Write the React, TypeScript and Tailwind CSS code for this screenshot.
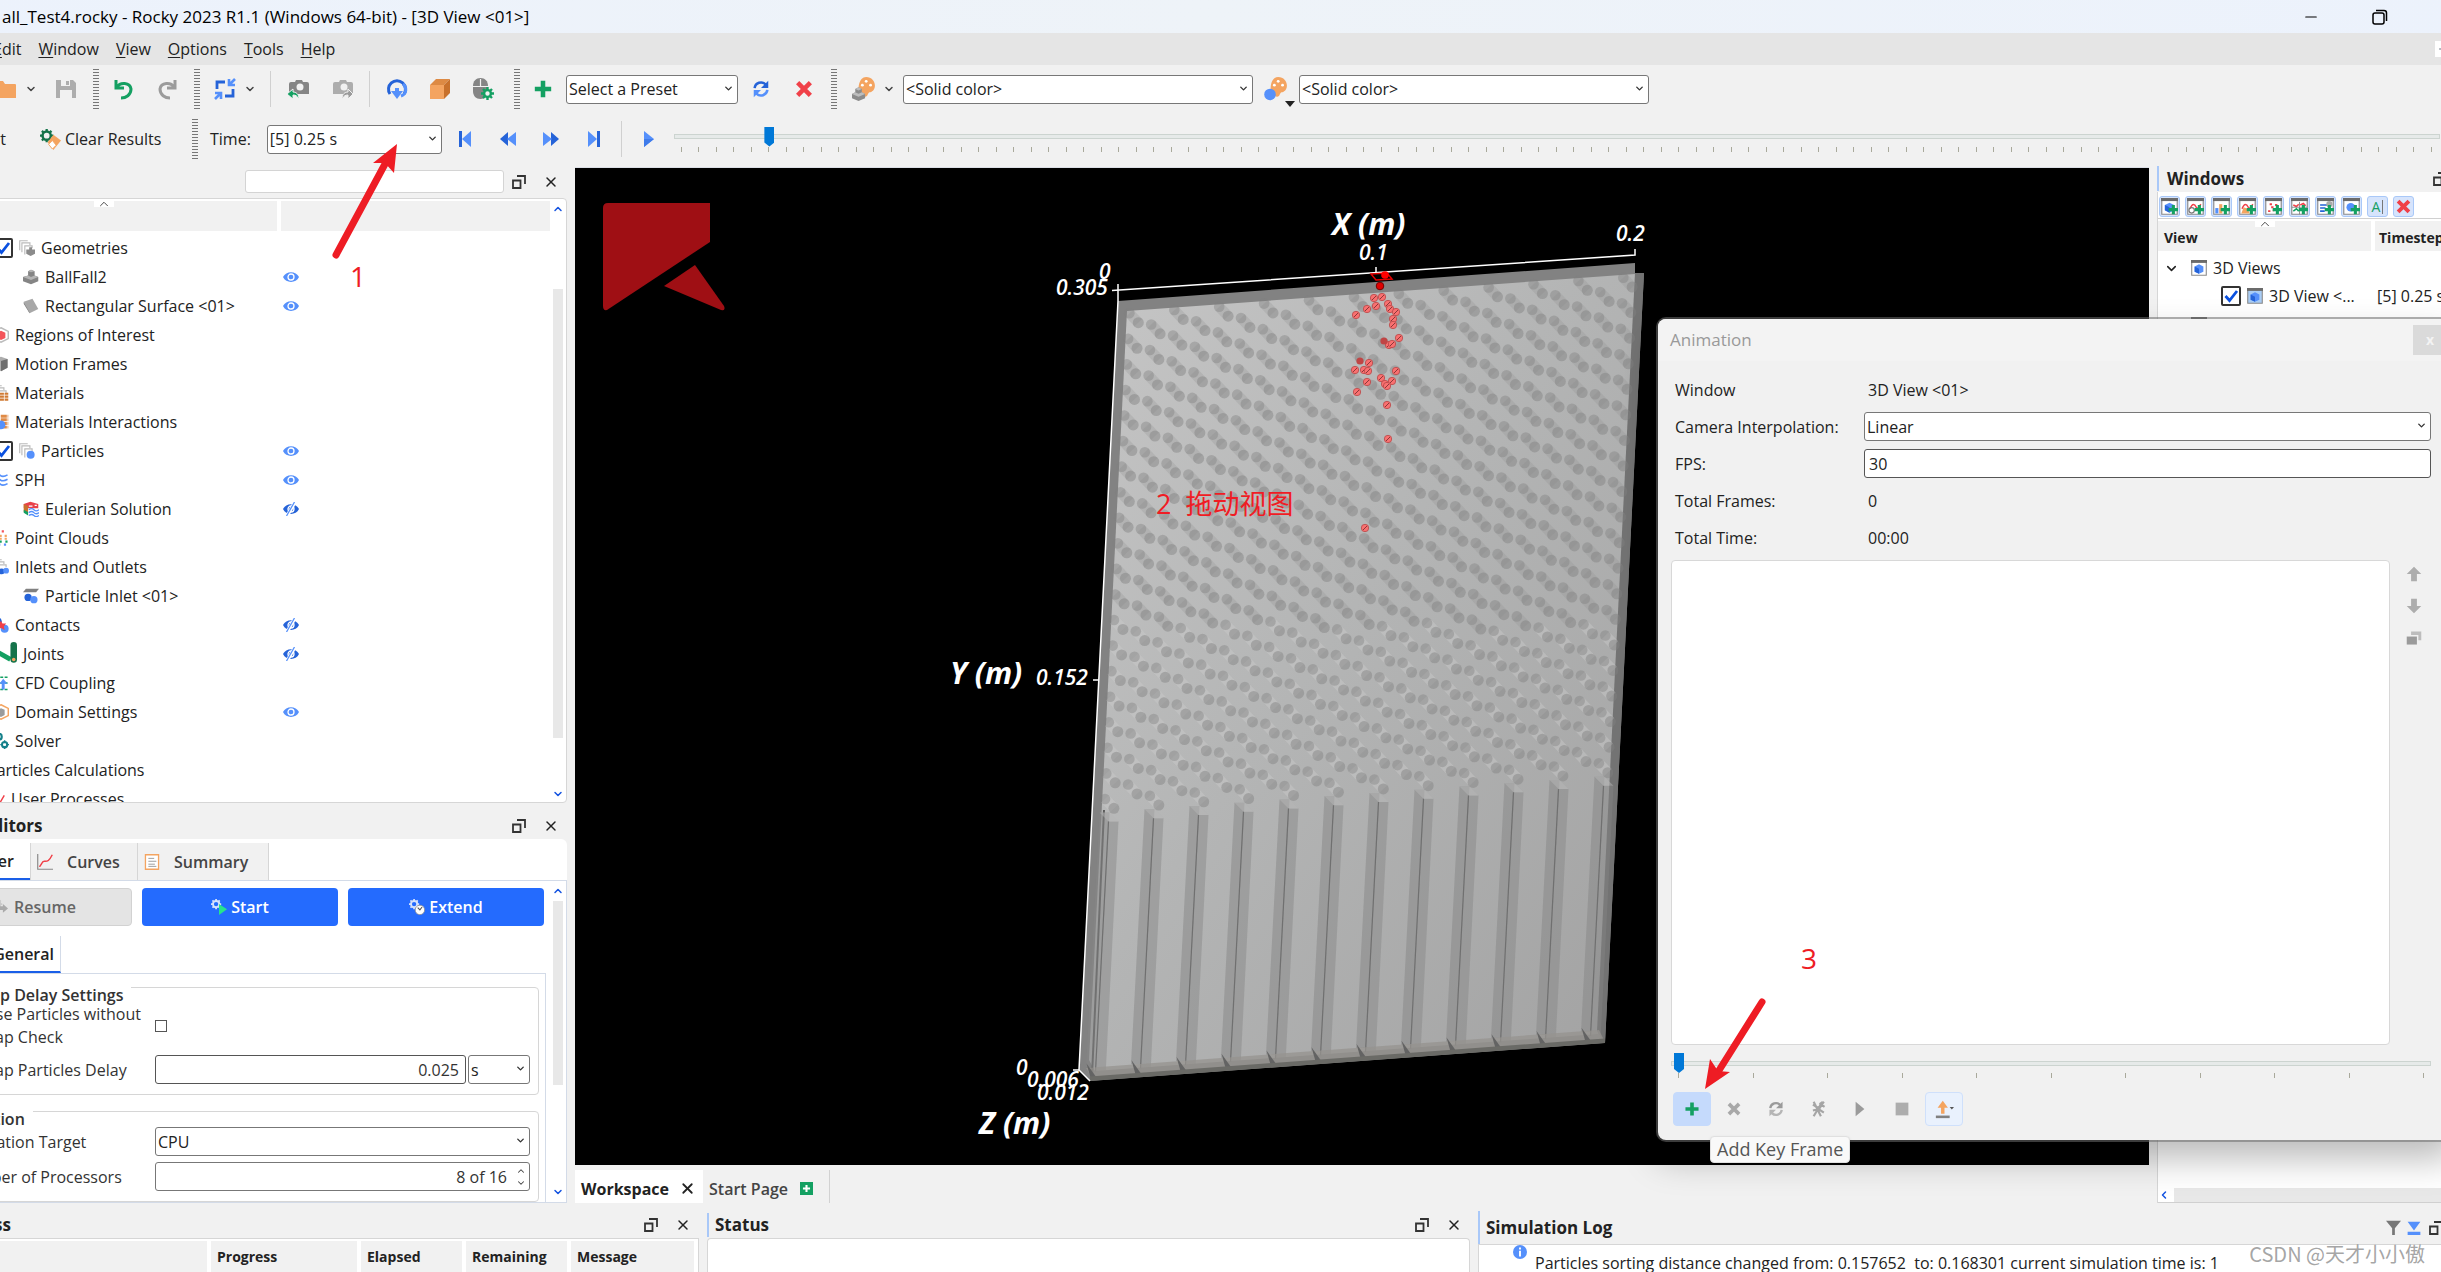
import React from 'react';
import { ChevronDown, ChevronUp, ChevronLeft, Minus, X } from 'lucide-react';

const BLUE = '#5590fb';
const DEEP = '#2563d8';
const GREEN = '#14a062';
const ORANGE = '#f4a460';

type IconProps = { children: React.ReactNode; size?: number; className?: string };

const Svg = ({ children, size = 22, className = '' }: IconProps) => (
  <svg width={size} height={size} viewBox="0 0 22 22" fill="none" aria-hidden="true" className={`shrink-0 ${className}`}>
    {children}
  </svg>
);

const Tool = ({ label, children }: { label: string; children: React.ReactNode }) => (
  <button type="button" aria-label={label} title={label} className="flex h-7 w-[22px] shrink-0 items-center justify-center">
    {children}
  </button>
);

const Grip = () => <div className="h-10 w-1.5 shrink-0 bg-[repeating-linear-gradient(to_bottom,#777_0_1px,transparent_1px_3px)]" />;
const Sep = () => <div className="h-9 w-px shrink-0 bg-[#d0d0d0]" />;

interface DropProps {
  label: string;
  value: string;
  className?: string;
}

const Drop = ({ label, value, className = '' }: DropProps) => (
  <div className={`relative h-[29px] shrink-0 ${className}`}>
    <select aria-label={label} defaultValue={value} className="h-full w-full appearance-none rounded-[3px] border border-[#777] bg-white pr-5 pl-0.5 text-base leading-none text-[#222]">
      <option>{value}</option>
    </select>
    <ChevronDown size={11} strokeWidth={3} className="pointer-events-none absolute top-2 right-1 text-[#333]" />
  </div>
);

const FloatIcon = () => (
  <svg width="14" height="14" viewBox="0 0 14 14" fill="none" stroke="#333" strokeWidth="1.8" aria-hidden="true">
    <path d="M1 5.5h7.5V13H1zM5 1h8v8" />
  </svg>
);

const DockButtons = () => (
  <div className="flex shrink-0 items-center gap-[17px]">
    <button type="button" aria-label="Float"><FloatIcon /></button>
    <button type="button" aria-label="Close"><X size={16} strokeWidth={2.2} className="text-[#222]" /></button>
  </div>
);

/* ---------- toolbar drawings ---------- */

const Refresh = ({ a = BLUE, b = DEEP, size = 22 }: { a?: string; b?: string; size?: number }) => (
  <Svg size={size}>
    <path d="M4 10a7 7 0 0 1 12-4" stroke={b} strokeWidth="2.8" />
    <path d="M19 2v8h-8z" fill={b} />
    <path d="M18 12a7 7 0 0 1-12 4" stroke={a} strokeWidth="2.8" />
    <path d="M3 20v-8h8z" fill={a} />
  </Svg>
);

const Plus = ({ size = 22 }: { size?: number }) => (
  <Svg size={size}><path d="M11 2v18M2 11h18" stroke={GREEN} strokeWidth="5" /></Svg>
);

const Cross = ({ color = '#f04048', size = 22 }: { color?: string; size?: number }) => (
  <Svg size={size}><path d="M4 4l14 14M18 4L4 18" stroke={color} strokeWidth="5" /></Svg>
);

const Camera = ({ body, arrow, flip }: { body: string; arrow: string; flip?: boolean }) => (
  <Svg>
    <path d="M4 4h4l1-2h6l1 2h4a2 2 0 0 1 2 2v10H2V6a2 2 0 0 1 2-2z" fill={body} />
    <circle cx="13" cy="9" r="3.5" fill="#f1f1f1" />
    {flip ? (
      <path d="M11 21c0-5 3-7 6-7v-3l5 5-5 5v-4c-3 0-4 1-6 4z" fill={arrow} stroke="#f1f1f1" />
    ) : (
      <path d="M12 21c0-5-3-7-6-7v-3l-6 5 6 5v-4c3 0 4 1 6 4z" fill={arrow} stroke="#f1f1f1" />
    )}
  </Svg>
);

const Palette = ({ cube }: { cube?: boolean }) => (
  <Svg size={24}>
    <path d="M13 0c5 0 8 4 8 8s-3 6-5 6c-2 1-1 4-4 4s-3-3-5-4c-2-2-1-14 6-14z" fill={ORANGE} />
    <circle cx="13" cy="4" r="1.3" fill="#fff" />
    <circle cx="9.5" cy="7.5" r="1.3" fill="#fff" />
    <circle cx="17" cy="7.5" r="1.3" fill="#fff" />
    {cube ? (
      <g>
        <path d="M3 11l3-1.5L9 11v3l3 1.5v4L6 22l-6-2.5v-4L3 14z" fill="#8b8b8b" />
        <path d="M3 11l3 1.4L9 11 6 9.5zM0 15.5L6 18l6-2.5L9 14l-3 1.3L3 14z" fill="#bdbdbd" />
      </g>
    ) : (
      <circle cx="5.5" cy="16" r="5.3" fill={BLUE} />
    )}
  </Svg>
);

const SmallGear = ({ color, children, size = 22 }: { color: string; children?: React.ReactNode; size?: number }) => (
  <Svg size={size}>
    <circle cx="7" cy="7" r="4.3" stroke={color} strokeWidth="2.6" />
    <path d="M7 0v3M7 11v3M0 7h3M11 7h3M2 2l2 2M10 10l2 2M12 2l-2 2M2 12l2-2" stroke={color} strokeWidth="2.4" />
    {children}
  </Svg>
);

const MENUS = ['Edit', 'Window', 'View', 'Options', 'Tools', 'Help'];

const TitleBar = () => (
  <header className="flex h-[33px] shrink-0 items-center bg-gradient-to-r from-[#ecf2fc] via-[#eef3f8] to-[#ecf2fc] pr-[93px] pl-[66px]">
    <h1 className="flex-1 text-[17px] text-black">all_Test4.rocky - Rocky 2023 R1.1 (Windows 64-bit) - [3D View &lt;01&gt;]</h1>
    <div className="flex items-center gap-[52px] text-black">
      <button type="button" aria-label="Minimize"><Minus size={18} strokeWidth={1.5} /></button>
      <button type="button" aria-label="Restore">
        <svg width="16" height="16" viewBox="0 0 16 16" fill="none" stroke="#000" strokeWidth="1.5">
          <rect x="1" y="4" width="11" height="11" rx="2" />
          <path d="M4 1.5h8a2.5 2.5 0 0 1 2.5 2.5v8" />
        </svg>
      </button>
    </div>
  </header>
);

const MenuBar = () => (
  <nav className="flex h-8 shrink-0 items-center bg-[#e5e5e5] pl-[57px] text-base text-[#222]">
    <div className="flex gap-[17px]">
      {MENUS.map((m) => (
        <button key={m} type="button">
          <span className="underline decoration-1 underline-offset-2">{m[0]}</span>{m.slice(1)}
        </button>
      ))}
    </div>
    <button type="button" aria-label="Minimize child window" className="mr-[30px] ml-auto h-4 w-4 bg-white">
      <Minus size={12} className="mx-auto text-gray-500" />
    </button>
  </nav>
);

const MainToolbar = () => (
  <div className="flex h-12 shrink-0 items-center pl-[58px]">
    <Tool label="Open">
      <Svg><path d="M0 3h9l2 3h10a1 1 0 0 1 1 1v13H0z" fill={ORANGE} /></Svg>
    </Tool>
    <ChevronDown size={12} strokeWidth={3} className="mr-[18px] ml-[9px] shrink-0 text-[#444]" />
    <Tool label="Save">
      <Svg>
        <path d="M1 2h17l3 3v15H1z" fill="#adadad" />
        <path d="M6 2h9v6H6zM5 12h12v8H5z" fill="#f1f1f1" />
        <path d="M11 3h3v4h-3z" fill="#adadad" />
      </Svg>
    </Tool>
    <div className="ml-4 flex items-center gap-3.5">
      <Grip />
      <div className="flex gap-[21px]">
        <Tool label="Undo">
          <Svg><path d="M3 2v8h8M4 9c3-5 13-5 14 2 0 6-5 9-10 9" stroke={GREEN} strokeWidth="3" /></Svg>
        </Tool>
        <Tool label="Redo">
          <Svg><path d="M19 2v8h-8M18 9C15 4 5 4 4 11c0 6 5 9 10 9" stroke="#9b9b9b" strokeWidth="3" /></Svg>
        </Tool>
      </div>
    </div>
    <div className="ml-4 flex items-center gap-3.5">
      <Grip />
      <div className="flex items-center">
        <Tool label="Fit view">
          <Svg>
            <path d="M21 1l-6 6M15 1v6h6" stroke={BLUE} strokeWidth="2.6" />
            <path d="M1 21l6-6M1 15h6v6" stroke={BLUE} strokeWidth="2.6" />
            <path d="M19 11v7h-8M3 11V4h8" stroke={DEEP} strokeWidth="2.8" />
          </Svg>
        </Tool>
        <ChevronDown size={12} strokeWidth={3} className="ml-2 text-[#444]" />
      </div>
    </div>
    <div className="ml-3.5 flex items-center gap-4">
      <Sep />
      <div className="flex gap-[22px]">
        <Tool label="Previous camera"><Camera body="#858585" arrow={GREEN} /></Tool>
        <Tool label="Next camera"><Camera body="#adadad" arrow="#9b9b9b" flip /></Tool>
      </div>
      <Sep />
      <div className="flex gap-[21px]">
        <Tool label="Rotate">
          <Svg>
            <path d="M4 16A8.5 8.5 0 1 1 18 16" stroke={DEEP} strokeWidth="3" />
            <path d="M15 18c6-2 6-9 2-12" stroke={BLUE} strokeWidth="3" />
            <path d="M5 13h12l-6 8z" fill={BLUE} />
            <path d="M9 10h4v5H9z" fill={BLUE} />
          </Svg>
        </Tool>
        <Tool label="Box">
          <Svg>
            <path d="M1 7h14v14H1z" fill={ORANGE} />
            <path d="M1 7l6-6h14l-6 6z" fill="#dd8a44" />
            <path d="M15 7l6-6v14l-6 6z" fill="#c8712c" />
          </Svg>
        </Tool>
        <Tool label="Mouse settings">
          <Svg>
            <path d="M1 8C1 3 4 0 8.500 0S16 3 16 8v5c0 5-3 8-7.500 8S1 18 1 13z" fill="#858585" />
            <path d="M1 8.5h15M8.5 1v7" stroke="#f1f1f1" strokeWidth="1.2" />
            <path d="M15.5 9v13M9 15.5h13M11 11l9 9M20 11l-9 9" stroke={GREEN} strokeWidth="2.4" />
            <circle cx="15.5" cy="15.5" r="3.4" stroke={GREEN} strokeWidth="2.4" fill="#f1f1f1" />
          </Svg>
        </Tool>
      </div>
    </div>
    <div className="ml-5 flex items-center gap-3">
      <Grip />
      <Tool label="Add preset"><Plus size={20} /></Tool>
      <Drop label="Preset" value="Select a Preset" className="w-[172px]" />
      <div className="flex gap-[21px]">
        <Tool label="Reload preset"><Refresh size={20} /></Tool>
        <Tool label="Delete preset"><Cross size={20} /></Tool>
      </div>
    </div>
    <div className="ml-4 flex items-center">
      <Grip />
      <div className="mr-2 ml-4 flex items-center gap-2">
        <Tool label="Geometry color"><Palette cube /></Tool>
        <ChevronDown size={12} strokeWidth={3} className="text-[#444]" />
      </div>
      <Drop label="Geometry coloring" value="<Solid color>" className="w-[350px]" />
      <div className="relative mx-3">
        <Tool label="Particle color"><Palette /></Tool>
        <span className="absolute -right-2 -bottom-1 border-x-[5px] border-t-[6px] border-x-transparent border-t-[#222]" />
      </div>
      <Drop label="Particle coloring" value="<Solid color>" className="w-[350px]" />
    </div>
  </div>
);

interface SliderProps {
  label: string;
  value: number;
  max: number;
  ticks: number;
}

const Slider = ({ label, value, max, ticks }: SliderProps) => (
  <div className="min-w-0 flex-1">
    <div className="relative flex h-5 items-center">
      <div className="h-[5px] w-full border border-[#ccd4d0] bg-[#e6eae9]" />
      <input
        type="range"
        aria-label={label}
        min={0}
        max={max}
        defaultValue={value}
        className="absolute inset-0 w-full appearance-none bg-transparent px-[3px] [&::-webkit-slider-thumb]:h-5 [&::-webkit-slider-thumb]:w-2.5 [&::-webkit-slider-thumb]:appearance-none [&::-webkit-slider-thumb]:bg-[#0078d7] [&::-webkit-slider-thumb]:[clip-path:polygon(0_0,100%_0,100%_80%,50%_100%,0_80%)]"
      />
    </div>
    <div className="flex justify-between px-[7px]">
      {Array.from({ length: ticks }, (_, i) => <i key={i} className="h-[5px] w-px bg-[#a9a99b]" />)}
    </div>
  </div>
);

const TimeToolbar = () => (
  <div className="flex h-[52px] shrink-0 items-center pr-[41px] text-base text-[#222]">
    <button type="button" className="w-[70px] text-right">Start</button>
    <button type="button" className="ml-[34px] flex w-[136px] items-center gap-1">
      <SmallGear color="#15734a" size={21}>
        <path d="M14 6l8 6-8 10-6-8z" fill={ORANGE} />
        <path d="M13 12l4 5-4 4-4-5z" fill="#fff" stroke={ORANGE} />
      </SmallGear>
      Clear Results
    </button>
    <div className="ml-4 flex items-center">
      <Grip />
      <span className="mr-4 ml-3">Time:</span>
      <Drop label="Time" value="[5] 0.25 s" className="w-[175px]" />
    </div>
    <div className="mr-4 ml-3 flex gap-[21px]">
      <Tool label="First step">
        <Svg><path d="M5 3h3v16H5z" fill={DEEP} /><path d="M17 3v16L8 11z" fill={BLUE} /></Svg>
      </Tool>
      <Tool label="Previous step">
        <Svg><path d="M11 4v14l-8-7z" fill={DEEP} /><path d="M19 4v14l-9-7z" fill={BLUE} /></Svg>
      </Tool>
      <Tool label="Next step">
        <Svg><path d="M11 4v14l8-7z" fill={DEEP} /><path d="M3 4v14l9-7z" fill={BLUE} /></Svg>
      </Tool>
      <Tool label="Last step">
        <Svg><path d="M14 3h3v16h-3z" fill={DEEP} /><path d="M5 3v16l9-8z" fill={BLUE} /></Svg>
      </Tool>
    </div>
    <Sep />
    <div className="mr-3.5 ml-4 flex">
      <Tool label="Play"><Svg><path d="M6 3l10 8-10 8z" fill={BLUE} /><path d="M6 11h10l-10 8z" fill="#3f7bea" /></Svg></Tool>
    </div>
    <Slider label="Timestep" value={5} max={100} ticks={101} />
  </div>
);

/* ---------- data tree ---------- */

const Stack = ({ children }: { children: React.ReactNode }) => (
  <Svg size={16}>
    <path d="M1 14V1h11M4 17V4h11v3M8 20V8h10v3" stroke="#bbb" strokeWidth="1.6" />
    {children}
  </Svg>
);

const Eye = ({ off }: { off?: boolean }) => (
  <svg width="16" height="14" viewBox="0 0 16 14" fill="none" aria-hidden="true">
    <path d="M0 7c3-6.500 13-6.500 16 0-3 6.500-13 6.500-16 0z" fill={off ? DEEP : BLUE} />
    <circle cx="8" cy="7" r="3" stroke="#fff" strokeWidth="1.3" />
    {off && <path d="M12 0L4 14" stroke="#fff" strokeWidth="3.5" />}
    {off && <path d="M11.5 0l-8 14" stroke={BLUE} strokeWidth="1.3" />}
  </svg>
);

const ICONS: Record<string, React.ReactNode> = {
  geometries: <Stack><path d="M10 13h4v-3h4v3h4v6l-6 3-6-3z" fill="#8b8b8b" /></Stack>,
  solid: (
    <Svg size={16}>
      <path d="M7 3l4-2 5 2v6l5 2v6l-10 4-11-4v-6l7-2z" fill="#858585" />
      <path d="M7 3l4 1.500L16 3l-5-2zM0 11l11 4 10-4-5-2-5 2-4-2z" fill="#b5b5b5" />
    </Svg>
  ),
  surface: <Svg size={16}><path d="M1 5l12-4 8 14-12 6z" fill="#a8a8a8" /><path d="M1 5v3l8 13v-1z" fill="#777" /></Svg>,
  region: <Svg size={16}><path d="M11 1l10 5v10l-10 5L1 16V6z" stroke="#bbb" strokeWidth="2" /><path d="M11 5l6 3v7l-6 3-6-3V8z" fill="#f4545a" /></Svg>,
  frame: <Svg size={16}><path d="M1 4l10-3 9 3v12l-9 5-10-5z" fill="#adadad" /><path d="M11 7l9-3v12l-9 5z" fill="#6f6f6f" /></Svg>,
  materials: <Stack><path d="M9 12h12M9 16h12M9 20h12" stroke="#d07a33" strokeWidth="3" strokeDasharray="6 1" /></Stack>,
  interactions: (
    <Svg size={16}>
      <path d="M2 3h19M2 8h19M2 13h19M2 18h19" stroke="#e08a45" strokeWidth="4" strokeDasharray="8 1" />
      <circle cx="11" cy="15" r="6" fill={BLUE} />
    </Svg>
  ),
  particles: <Stack><circle cx="16" cy="16" r="5.500" fill={BLUE} /></Stack>,
  sph: <Svg size={16}><path d="M1 4q4-4 8 0t11 0M1 10q4-4 8 0t11 0M1 16q4-4 8 0t11 0" stroke={BLUE} strokeWidth="2.2" /></Svg>,
  eulerian: (
    <Svg size={16}>
      <path d="M1 4l9-3 11 3v6H1z" fill="#e8404a" />
      <path d="M1 4l6 3v12l-6-4z" fill="#c8712c" />
      <path d="M1 12l6 3v5l-6-4z" fill={GREEN} />
      <path d="M8 12q4-3 7 0t7 0M8 16q4-3 7 0t7 0M8 20q4-3 7 0t7 0" stroke={BLUE} strokeWidth="1.8" />
      <path d="M8 7h5M16 6h3" stroke="#fff" strokeWidth="1.5" />
    </Svg>
  ),
  clouds: (
    <Svg size={16}>
      <path d="M5 2h14" stroke="#f4545a" strokeWidth="3" strokeDasharray="3 4" />
      <path d="M9 8h12M9 12h12" stroke={ORANGE} strokeWidth="3" strokeDasharray="3 4" />
      <path d="M9 16h12" stroke={GREEN} strokeWidth="3" strokeDasharray="3 5" />
      <path d="M7 20h14" stroke={BLUE} strokeWidth="3" strokeDasharray="3 5" />
    </Svg>
  ),
  inlets: <Stack><circle cx="12" cy="17" r="4" fill={DEEP} /><circle cx="18" cy="16" r="4" fill={BLUE} /></Stack>,
  inlet: <Svg size={16}><path d="M4 1h18l-4 5H0z" fill="#808080" /><circle cx="7" cy="13" r="5" fill={DEEP} /><circle cx="15" cy="16" r="5" fill={BLUE} /></Svg>,
  contacts: <Svg size={16}><circle cx="6" cy="6" r="6" fill={DEEP} /><circle cx="16" cy="16" r="5.500" fill={BLUE} /><path d="M11 5l2 4 5 0-3 4 1 5-5-3-5 2 1-5-3-3 5-1z" fill="#f04048" /></Svg>,
  joints: <Svg size={24}><path d="M2 20V8l14 8" stroke={GREEN} strokeWidth="4.500" /><path d="M19 3v13" stroke="#15734a" strokeWidth="6" strokeLinecap="round" /><circle cx="19" cy="16" r="1.600" fill={ORANGE} /></Svg>,
  cfd: <Svg size={16}><path d="M10 3h11M10 11h11M10 20h11" stroke={GREEN} strokeWidth="2" strokeDasharray="4 2" /><path d="M6 20V4" stroke="#f4545a" strokeWidth="2" strokeDasharray="3 2" /><path d="M14 5l6 7h-4v8h-4v-8H9z" fill={BLUE} /></Svg>,
  domain: <Svg size={16}><path d="M11 1l10 5v10l-10 5L1 16V6z" stroke={ORANGE} strokeWidth="2" /><path d="M11 6l5 2v7l-5 3-6-3V8z" fill="#9b9b9b" /></Svg>,
  solver: <Svg size={16}><circle cx="8" cy="5" r="4" stroke="#15808a" strokeWidth="3" /><circle cx="16" cy="16" r="3.500" stroke="#15808a" strokeWidth="3" /><path d="M16 10v12M10 16h3M19 16h3M8 0v2" stroke="#15808a" strokeWidth="2" /><circle cx="16" cy="16" r="2" fill="#fff" /></Svg>,
  process: <Svg size={16}><path d="M1 20l8-8 5 6 7-12" stroke="#f04048" strokeWidth="2" /></Svg>,
};

type Row = { label: string; icon: string; pad?: string; check?: boolean; eye?: 'on' | 'off' };

const ROWS: Row[] = [
  { label: 'Geometries', icon: 'geometries', check: true },
  { label: 'BallFall2', icon: 'solid', pad: 'pl-[86px]', eye: 'on' },
  { label: 'Rectangular Surface <01>', icon: 'surface', pad: 'pl-[86px]', eye: 'on' },
  { label: 'Regions of Interest', icon: 'region' },
  { label: 'Motion Frames', icon: 'frame' },
  { label: 'Materials', icon: 'materials' },
  { label: 'Materials Interactions', icon: 'interactions' },
  { label: 'Particles', icon: 'particles', check: true, eye: 'on' },
  { label: 'SPH', icon: 'sph', eye: 'on' },
  { label: 'Eulerian Solution', icon: 'eulerian', pad: 'pl-[86px]', eye: 'off' },
  { label: 'Point Clouds', icon: 'clouds' },
  { label: 'Inlets and Outlets', icon: 'inlets' },
  { label: 'Particle Inlet <01>', icon: 'inlet', pad: 'pl-[86px]' },
  { label: 'Contacts', icon: 'contacts', eye: 'off' },
  { label: 'Joints', icon: 'joints', eye: 'off' },
  { label: 'CFD Coupling', icon: 'cfd' },
  { label: 'Domain Settings', icon: 'domain', eye: 'on' },
  { label: 'Solver', icon: 'solver' },
  { label: 'Particles Calculations', icon: 'solid', pad: 'pl-7' },
  { label: 'User Processes', icon: 'process', pad: 'pl-13' },
];

const Check = ({ label }: { label: string }) => (
  <span className="relative flex h-5 w-5 shrink-0">
    <input type="checkbox" aria-label={label} defaultChecked className="peer h-5 w-5 appearance-none rounded-[2px] border-2 border-[#333] bg-white" />
    <svg viewBox="0 0 20 20" className="pointer-events-none absolute inset-0 hidden peer-checked:block" fill="none">
      <path d="M4.5 10l4 4.5L16 5" stroke="#0a50e0" strokeWidth="2.8" />
    </svg>
  </span>
);

const DataTree = () => (
  <>
    <div className="flex h-[33px] shrink-0 items-center justify-end gap-2 pr-2">
      <input type="search" aria-label="Filter tree" className="h-[23px] w-[259px] rounded-[3px] border border-[#d4d4d4] bg-white px-1" />
      <DockButtons />
    </div>
    <section className="flex min-h-0 flex-1 overflow-hidden rounded-r border border-[#d6d6d6] bg-white pt-0.5">
      <div className="flex min-w-0 flex-1 flex-col">
        <div className="flex h-[30px] shrink-0 gap-1">
          <div className="flex w-[340px] justify-end bg-[#f1f1f1] pr-[163px]">
            <span className="h-1.5 w-5 bg-white"><ChevronUp size={14} strokeWidth={1.5} className="mx-auto -mt-1 text-[#333]" /></span>
          </div>
          <div className="flex-1 bg-[#f1f1f1]" />
        </div>
        <ul className="mt-0.5 text-base text-[#222]">
          {ROWS.map((row) => (
            <li key={row.label} className="flex h-[29px] items-center">
              <div className={`flex w-[346px] items-center gap-1.5 ${row.pad ?? 'pl-14'}`}>
                {row.check && <Check label={row.label} />}
                {ICONS[row.icon]}
                <span className="whitespace-nowrap">{row.label}</span>
              </div>
              {row.eye && <button type="button" aria-label={`Toggle ${row.label}`}><Eye off={row.eye === 'off'} /></button>}
            </li>
          ))}
        </ul>
      </div>
      <div className="flex w-4 shrink-0 flex-col items-center pt-0.5 pb-0.5 text-[#1453e0]">
        <ChevronUp size={12} strokeWidth={3} />
        <div className="mt-[74px] mb-[50px] w-2.5 flex-1 bg-[#e8e8e8]" />
        <ChevronDown size={12} strokeWidth={3} />
      </div>
    </section>
  </>
);

/* ---------- data editors ---------- */

const GroupTitle = ({ children }: { children: React.ReactNode }) => (
  <h3 className="-mt-px -ml-1.5 w-fit bg-white pr-2 text-base leading-4 font-semibold text-[#333]">{children}</h3>
);

const DataEditors = () => (
  <>
    <div className="flex h-9 shrink-0 items-center justify-between pt-2.5 pr-2 pl-[47px]">
      <h2 className="text-[17px] leading-6 font-bold text-[#222]">Editors</h2>
      <DockButtons />
    </div>
    <section className="flex h-[364px] shrink-0 flex-col overflow-hidden rounded-tr-md border-b border-[#d3dbe8] bg-white">
      <div className="flex h-[42px] shrink-0 items-end border-b border-[#d3dbe8] text-base font-semibold text-[#444]">
        <button type="button" className="h-[37px] w-[94px] border-b-2 border-[#1a5fe8] pr-4 text-right text-[#222]">Solver</button>
        <button type="button" className="flex h-[37px] w-[108px] items-center gap-3.5 border-x border-[#d6d6d6] bg-[#f1f1f1] pl-1.5">
          <Svg size={16}><path d="M1 0v21h21" stroke="#888" strokeWidth="1.6" /><path d="M3 17c3 0 3-7 7-7s6 1 11-9" stroke="#f04048" strokeWidth="2" /></Svg>
          Curves
        </button>
        <button type="button" className="flex h-[37px] w-[131px] items-center gap-3.5 border-r border-[#d6d6d6] bg-[#f1f1f1] pl-1.5">
          <Svg size={16}><path d="M2 1h18v20H2z" stroke={ORANGE} strokeWidth="1.8" fill="#fff" /><path d="M6 6h8M6 10h11M6 14h9M6 17h11" stroke="#999" strokeWidth="1.3" /></Svg>
          Summary
        </button>
      </div>
      <div className="flex min-h-0 flex-1">
        <div className="flex min-w-0 flex-1 flex-col overflow-hidden">
          <div className="mt-[7px] grid h-[38px] shrink-0 grid-cols-3 gap-2.5 pr-0.5 text-base font-semibold text-white">
            <button type="button" className="flex items-center justify-center gap-1.5 rounded border border-[#d2d2d2] bg-[#e4e4e4] text-[#666]">
              <SmallGear color="#c9c9c9" size={16}><path d="M10 10h5V7l7 6-7 6v-4h-5z" fill="#aaa" /></SmallGear>
              Resume
            </button>
            <button type="button" className="flex items-center justify-center gap-1 rounded bg-[#246bfe]">
              <SmallGear color="#d6e2fb" size={16}><path d="M11 7l11 7-11 8z" fill="#27e38c" /></SmallGear>
              Start
            </button>
            <button type="button" className="flex items-center justify-center gap-1 rounded bg-[#246bfe]">
              <SmallGear color="#d6e2fb" size={16}>
                <circle cx="15" cy="15" r="6.5" fill="#fff" stroke="#888" />
                <path d="M12 12l3 3 3-4" stroke="#555" strokeWidth="1.5" />
              </SmallGear>
              Extend
            </button>
          </div>
          <div className="mt-2.5 flex h-[37px] shrink-0">
            <button type="button" className="w-[125px] border-r border-b-2 border-r-[#d3dbe8] border-b-[#1a5fe8] pr-1.5 text-right text-base font-semibold text-[#222]">General</button>
          </div>
          <div className="min-h-0 flex-1 overflow-hidden border-t border-r border-[#d3dbe8] pt-[13px] pr-1.5 pl-3">
            <div className="rounded border border-[#d6d6d6] pr-2 pb-2.5 pl-1.5 text-base text-[#333]">
              <GroupTitle>Overlap Delay Settings</GroupTitle>
              <div className="flex items-center">
                <label htmlFor="release" className="w-[200px] leading-[23px]">Release Particles without<br />Overlap Check</label>
                <input id="release" type="checkbox" className="h-3 w-3 appearance-none border border-[#555] bg-white" />
              </div>
              <div className="mt-1.5 flex items-center gap-0.5">
                <label htmlFor="delay" className="w-[198px]">Overlap Particles Delay</label>
                <input id="delay" defaultValue="0.025" className="h-[29px] min-w-0 flex-1 rounded-[3px] border border-[#555] pr-1.5 text-right" />
                <Drop label="Delay unit" value="s" className="w-[62px]" />
              </div>
            </div>
            <div className="mt-4 rounded border border-[#d6d6d6] pr-2 pb-2.5 pl-1.5 text-base text-[#333]">
              <GroupTitle>Execution</GroupTitle>
              <div className="flex items-center">
                <span className="w-[200px]">Simulation Target</span>
                <Drop label="Simulation Target" value="CPU" className="min-w-0 flex-1" />
              </div>
              <div className="mt-1.5 flex items-center">
                <label htmlFor="procs" className="w-[200px]">Number of Processors</label>
                <div className="relative min-w-0 flex-1">
                  <input id="procs" defaultValue="8 of 16" className="h-[29px] w-full rounded-[3px] border border-[#777] pr-[22px] text-right" />
                  <span className="absolute top-1 right-1 flex flex-col gap-0.5 text-[#444]">
                    <ChevronUp size={10} strokeWidth={2.5} />
                    <ChevronDown size={10} strokeWidth={2.5} />
                  </span>
                </div>
              </div>
            </div>
          </div>
        </div>
        <div className="flex w-[21px] shrink-0 flex-col items-center border-r border-[#d3dbe8] py-1 pl-1 text-[#1453e0]">
          <ChevronUp size={12} strokeWidth={3} />
          <div className="mt-1 h-[184px] w-2.5 bg-[#e8e8e8]" />
          <ChevronDown size={12} strokeWidth={3} className="mt-auto" />
        </div>
      </div>
    </section>
  </>
);

/* ---------- 3D scene ---------- */

const PEG_ROWS = 39;
const pegs = Array.from({ length: PEG_ROWS }, (_, r) =>
  Array.from({ length: r % 2 ? 11 : 12 }, (_, k) => {
    const c = k + (r % 2 ? 0.5 : 0);
    return { x: 1129.4 + c * 44.9 - r * 0.642, y: 313.3 - c * 3.24 + r * 12.78 };
  })
).flat();

const fins = Array.from({ length: 12 }, (_, k) => ({ x: 1099.5 + k * 45, y: 812.5 - k * 3.24 }));

const BALLS: [number, number][] = [
  [1374, 298], [1382, 297], [1376, 306], [1388, 304], [1367, 309], [1390, 309], [1396, 312], [1356, 315], [1393, 319],
  [1393, 325], [1399, 338], [1389, 345], [1392, 344], [1369, 363], [1355, 370], [1364, 370], [1368, 371], [1396, 371],
  [1367, 382], [1381, 378], [1392, 381], [1385, 384], [1387, 386], [1357, 392], [1387, 405], [1388, 439], [1365, 528],
];

const Scene = () => (
  <svg viewBox="575 168 1574 997" preserveAspectRatio="xMinYMin slice" className="h-full w-full" role="img" aria-label="3D view">
    <defs>
      <linearGradient id="plate" x1="0" y1="0" x2="1" y2="1">
        <stop offset="0" stopColor="#c6c6c6" />
        <stop offset="0.45" stopColor="#b4b5b5" />
        <stop offset="1" stopColor="#a2a2a2" />
      </linearGradient>
      <clipPath id="body"><path d="M1118 301L1635 263V273H1644L1605 1043L1090 1081L1079 1070Z" /></clipPath>
    </defs>

    <path d="M608 203H710V242L607 310Q603 311 603 306V208Q603 203 608 203Z" fill="#9f0f14" />
    <path d="M695 265L724 306Q726 311 721 310L664 286Z" fill="#9f0f14" />

    <path d="M1118 301L1635 263V273H1644L1605 1043L1090 1081L1079 1070Z" fill="#828282" />
    <path d="M1127 311L1635 274L1636 290L1598 1034L1095 1071L1089 1060Z" fill="url(#plate)" />
    <path d="M1635 273H1644L1605 1043L1597 1031Z" fill="#737373" />
    <path d="M1104 810L1092 1076" stroke="#5c5c5c" strokeWidth="2" />

    <g clipPath="url(#body)">
      {pegs.map((p, i) => (
        <g key={i}>
          <path
            d={`M${p.x} ${p.y}l8.9 9.4`}
            stroke={p.y > 620 ? '#cacaca' : '#929292'}
            strokeOpacity={p.y > 620 ? 0.45 : 0.28}
            strokeWidth="10.6"
          />
          <circle cx={p.x} cy={p.y} r="5.3" fill="#808080" fillOpacity="0.4" />
          <circle cx={p.x + 8.9} cy={p.y + 9.4} r="5.5" fill="#808080" fillOpacity="0.45" />
        </g>
      ))}
      {fins.map((f, i) => (
        <g key={i}>
          <path d={`M${f.x} ${f.y}h10l-13.500 255h-10z`} fill="#868686" fillOpacity="0.5" />
          <path d={`M${f.x + 9} ${f.y + 9}h10l-13 255h-10z`} fill="#868686" fillOpacity="0.45" />
          <path d={`M${f.x} ${f.y}h10l9 9h-10z`} fill="#b5b5b5" fillOpacity="0.5" />
          <path d={`M${f.x + 9} ${f.y + 9}l-13 250`} stroke="#707070" strokeWidth="1.2" />
        </g>
      ))}
      <path d="M1086 1068L1599 1030L1604 1040L1092 1078Z" fill="#96938f" fillOpacity="0.75" />
      {fins.map((f, i) => (
        <path key={i} d={`M${f.x - 13} ${f.y + 251}l10 14h-6z`} fill="#636363" />
      ))}
      <path d="M1090 1079L1605 1041" stroke="#6a6a66" strokeWidth="5" />
    </g>

    <g stroke="#fff" strokeWidth="1.5" fill="none">
      <path d="M1112 290.5L1635 255V249" />
      <path d="M1118 284V301L1079 1070L1090 1081" />
      <path d="M1376 267v6M1093 680h6M1073 1070h6" />
    </g>

    {BALLS.map(([x, y]) => (
      <g key={`${x}-${y}`}>
        <circle cx={x} cy={y} r="3.7" fill="#f97070" stroke="#b54848" strokeWidth="0.8" />
        <path d={`M${x - 2} ${y + 2}l4-4`} stroke="#7c3434" strokeWidth="0.9" />
      </g>
    ))}
    <circle cx="1384" cy="341" r="3.6" fill="#c04545" />
    <circle cx="1360" cy="361" r="3.6" fill="#c04545" />
    <path d="M1371 274L1387 273L1392 279L1376 280Z" stroke="#e60000" strokeWidth="1.5" fill="none" />
    <circle cx="1385" cy="275" r="3.8" fill="#f00" />
    <circle cx="1380" cy="286" r="3.8" fill="#e00000" stroke="#700" />

    <g fill="#fff" fontFamily="'Open Sans', sans-serif" fontStyle="italic" fontWeight="700" fontSize="30">
      <text x="1332" y="235">X (m)</text>
      <text x="950" y="684">Y (m)</text>
      <text x="979" y="1134">Z (m)</text>
    </g>
    <g fill="#fff" fontFamily="'Open Sans', sans-serif" fontStyle="italic" fontWeight="600" fontSize="21">
      <text x="1359" y="260">0.1</text>
      <text x="1616" y="241">0.2</text>
      <text x="1099" y="279">0</text>
      <text x="1056" y="295">0.305</text>
      <text x="1036" y="685">0.152</text>
      <text x="1016" y="1075">0</text>
      <text x="1027" y="1087">0.006</text>
      <text x="1037" y="1100">0.012</text>
    </g>
    <text x="1156" y="514" fill="#f01c24" fontFamily="'Open Sans', 'Noto Sans CJK SC', sans-serif" fontSize="27">2&nbsp; 拖动视图</text>
  </svg>
);

const Workspace = () => (
  <main className="flex min-w-0 flex-1 flex-col pt-0.5">
    <div className="min-h-0 flex-1 overflow-hidden border-t border-[#dcdfe6] bg-black"><Scene /></div>
    <div className="flex h-[38px] shrink-0 items-end text-base">
      <button type="button" className="flex h-[33px] w-32 items-center gap-2.5 bg-white pt-1 pl-1.5 font-bold text-[#222]">
        Workspace <X size={17} strokeWidth={2.5} />
      </button>
      <button type="button" className="flex h-[33px] w-[127px] items-center gap-3 border-r border-[#d2d2d2] pt-1 pl-1.5 font-semibold text-[#444]">
        Start Page
        <Svg size={13}><path d="M0 0h22v22H0z" fill={GREEN} /><path d="M11 5v12M5 11h12" stroke="#fff" strokeWidth="3.5" /></Svg>
      </button>
    </div>
  </main>
);

/* ---------- windows dock ---------- */

const WindowIcon = ({ children, size = 17, tint = '#fff' }: { children?: React.ReactNode; size?: number; tint?: string }) => (
  <Svg size={size}>
    <path d="M1 1h20v20H1z" fill={tint} stroke="#8a8a8a" strokeWidth="1.5" />
    <path d="M0 0h22v4H0z" fill="#6b6b6b" />
    {children}
  </Svg>
);

const CubeMark = () => (
  <>
    <path d="M11 6l6 3v7l-6 3-6-3V9z" fill={BLUE} />
    <path d="M11 12v7l-6-3V9z" fill={DEEP} />
  </>
);

const GreenPlus = () => <path d="M16 9v12M10 15h12" stroke={GREEN} strokeWidth="4" />;

const VIEW_TOOLS: { label: string; art: React.ReactNode }[] = [
  { label: 'New 3D view', art: <CubeMark /> },
  { label: 'New time plot', art: <><path d="M4 14c3-8 6-6 8-2s4-2 6-4" stroke="#f04048" strokeWidth="2" /><circle cx="6" cy="16" r="3.500" stroke="#777" strokeWidth="1.5" /></> },
  { label: 'New histogram', art: <><path d="M3 13h4v7H3z" fill={BLUE} /><path d="M8 8h4v12H8z" fill={ORANGE} /></> },
  { label: 'New cross plot', art: <><path d="M3 20l3-8 5 2 3 6z" fill={ORANGE} /><path d="M4 14c3-8 6-6 8-2s4-2 6-4" stroke="#f04048" strokeWidth="2" /></> },
  { label: 'New scatter plot', art: <path d="M4 17h3M8 12h3M13 9h3M6 8h3M10 16h2" stroke="#f04048" strokeWidth="2.5" /> },
  { label: 'New multi plot', art: <><path d="M3 9l4 2 3-3M12 9l4-2 3 3" stroke="#f04048" strokeWidth="2" /><path d="M3 17l4-3 3 3" stroke={GREEN} strokeWidth="2" /><path d="M11 5v16M1 12h20" stroke="#777" /></> },
  { label: 'New table', art: <><path d="M4 9h9M4 13h7M4 17h6" stroke={DEEP} strokeWidth="2" /><circle cx="16" cy="8" r="4" fill="#aaa" /></> },
  { label: 'New particle view', art: <circle cx="10" cy="12" r="5.500" fill={BLUE} /> },
];

const toolButton = 'flex h-[21px] w-[21px] items-center justify-center rounded-[3px] border border-[#a9c8f8] bg-[#d6e4fc]';

const WindowsDock = () => (
  <aside className="flex w-[324px] shrink-0 flex-col">
    <div className="flex h-[27px] items-center gap-2">
      <div className="h-[25px] w-0.5 bg-[#a9c8f8]" />
      <h2 className="w-[258px] text-[17px] font-bold text-[#222]">Windows</h2>
      <button type="button" aria-label="Float"><FloatIcon /></button>
    </div>
    <section className="flex min-h-0 flex-1 flex-col border-l border-[#d6d6d6] bg-white">
      <div className="flex gap-[5px] border-b border-[#d0d0d0] px-px pt-1 pb-px">
        {VIEW_TOOLS.map((t) => (
          <button key={t.label} type="button" aria-label={t.label} className={toolButton}>
            <WindowIcon>{t.art}<GreenPlus /></WindowIcon>
          </button>
        ))}
        <button type="button" aria-label="Rename" className={`${toolButton} text-sm text-[#14a062]`}>A<span className="ml-0.5 h-3.5 w-px bg-[#777]" /></button>
        <button type="button" aria-label="Delete view" className={toolButton}><Cross size={17} /></button>
      </div>
      <table className="mt-0.5 w-full table-fixed border-collapse text-base text-[#222]">
        <thead>
          <tr className="h-[30px] text-left text-sm font-bold">
            <th className="relative w-[215px] border-r-4 border-white bg-[#f1f1f1] pt-1 pl-1.5">
              View
              <span className="absolute top-0 left-[97px] h-1.5 w-5 bg-white"><ChevronUp size={14} strokeWidth={1.5} className="mx-auto -mt-1 text-[#333]" /></span>
            </th>
            <th className="bg-[#f1f1f1] pt-1 pl-1">Timestep</th>
          </tr>
        </thead>
        <tbody>
          <tr className="h-[30px]">
            <td><div className="flex items-center gap-1.5 pt-1 pl-1.5"><ChevronDown size={15} strokeWidth={2.5} className="mr-1.5" /><WindowIcon size={16}><CubeMark /></WindowIcon>3D Views</div></td>
            <td />
          </tr>
          <tr className="h-[29px]">
            <td><div className="flex items-center gap-1.5 pl-[63px]"><Check label="Show 3D View" /><WindowIcon size={16} tint="#a9cdf5"><CubeMark /></WindowIcon>3D View &lt;...</div></td>
            <td className="pl-1">[5] 0.25 s</td>
          </tr>
          <tr className="h-[29px]">
            <td><div className="pl-[33px]"><WindowIcon size={16} /></div></td>
            <td />
          </tr>
        </tbody>
      </table>
      <div className="mt-auto flex h-4 items-center gap-1 border-b border-[#d0d0d0] text-[#1453e0]">
        <ChevronLeft size={12} strokeWidth={3} />
        <div className="h-[14px] flex-1 bg-[#e8e8e8]" />
      </div>
    </section>
  </aside>
);

/* ---------- bottom docks ---------- */

const COLS = [
  { label: '', w: 'w-[273px]' },
  { label: 'Progress', w: 'w-[150px]' },
  { label: 'Elapsed', w: 'w-[105px]' },
  { label: 'Remaining', w: 'w-[105px]' },
  { label: 'Message', w: '' },
];

const BottomDocks = () => (
  <footer className="grid h-[69px] shrink-0 grid-cols-[763fr_763fr_1003fr] gap-2 overflow-hidden">
    <section className="flex flex-col">
      <div className="flex h-[35px] items-center justify-between pt-2 pr-2">
        <h2 className="w-[75px] text-right text-[17px] leading-6 font-bold text-[#222]">Progress</h2>
        <DockButtons />
      </div>
      <div className="flex-1 border-t border-r border-[#d6d6d6] bg-white pt-0.5">
        <table className="w-full table-fixed border-collapse">
          <thead>
            <tr className="h-[31px] text-left text-sm font-bold text-[#222]">
              {COLS.map((c) => <th key={c.label} className={`border-r-4 border-white bg-[#f1f1f1] pl-1.5 ${c.w}`}>{c.label}</th>)}
            </tr>
          </thead>
        </table>
      </div>
    </section>
    <section className="flex flex-col">
      <div className="flex h-[35px] items-center justify-between pt-2 pr-2">
        <h2 className="border-l-2 border-[#a9c8f8] pl-1.5 text-[17px] leading-6 font-bold text-[#222]">Status</h2>
        <DockButtons />
      </div>
      <div className="flex-1 rounded-t border border-b-0 border-[#d6d6d6] bg-white" />
    </section>
    <section className="flex flex-col">
      <div className="flex h-[41px] items-center gap-2 pt-2">
        <h2 className="w-[900px] border-l-2 border-[#a9c8f8] pl-1.5 text-[17px] leading-[33px] font-bold text-[#222]">Simulation Log</h2>
        <div className="flex items-center gap-1.5">
          <button type="button" aria-label="Filter log">
            <Svg size={15}><path d="M0 1h22L13 12v10H9V12z" fill="#777" /></Svg>
          </button>
          <button type="button" aria-label="Scroll to end">
            <Svg size={14}><path d="M1 1h20L11 15zM1 17h20v5H1z" fill={BLUE} /></Svg>
          </button>
        </div>
        <button type="button" aria-label="Float"><FloatIcon /></button>
      </div>
      <div className="flex flex-1 gap-2 border-t border-l border-[#d6d6d6] bg-white pl-[34px]">
        <Svg size={14}><circle cx="11" cy="11" r="11" fill={BLUE} /><path d="M11 4v3M11 9v9" stroke="#fff" strokeWidth="3" /></Svg>
        <p className="pt-1.5 text-base whitespace-pre text-[#222]">Particles sorting distance changed from: 0.157652  to: 0.168301 current simulation time is: 1</p>
      </div>
    </section>
  </footer>
);

/* ---------- animation dialog ---------- */

const frameButton = 'flex h-[34px] w-[38px] items-center justify-center rounded border';

const AnimationDialog = () => (
  <div role="dialog" aria-label="Animation" className="absolute top-[319px] -right-3.5 w-[797px] rounded-lg bg-[#f1f1f1] text-base text-[#222] shadow-[0_0_0_2px_rgba(110,110,110,0.55),0_18px_36px_rgba(0,0,0,0.28)]">
    <div className="flex h-[42px] items-center justify-between rounded-t-lg bg-[#f3f3f3] pl-3 text-[17px] text-[#999]">
      <span>Animation</span>
      <button type="button" aria-label="Close dialog" className="mr-2 flex h-[30px] w-[34px] items-center justify-center bg-[#dadada] text-sm font-bold text-[#f3f3f3]">x</button>
    </div>
    <div className="grid auto-rows-[37px] grid-cols-[189px_1fr] items-center pt-2.5 pr-6 pl-[17px]">
      <span>Window</span>
      <span className="pl-1">3D View &lt;01&gt;</span>
      <span>Camera Interpolation:</span>
      <Drop label="Camera Interpolation" value="Linear" />
      <label htmlFor="fps">FPS:</label>
      <input id="fps" defaultValue="30" className="h-[29px] rounded-[3px] border border-[#555] bg-white pl-1" />
      <span>Total Frames:</span>
      <span className="pl-1">0</span>
      <span>Total Time:</span>
      <span className="pl-1">00:00</span>
    </div>
    <div className="mt-1 flex gap-4 pr-[33px] pl-[13px]">
      <div className="h-[485px] flex-1 rounded border border-[#d8d8d8] bg-white" />
      <div className="flex w-4 flex-col gap-4 pt-1.5">
        <button type="button" aria-label="Move up"><Svg size={16}><path d="M11 1l10 10h-6v10H7V11H1z" fill="#adadad" /></Svg></button>
        <button type="button" aria-label="Move down"><Svg size={16}><path d="M11 21L1 11h6V1h8v10h6z" fill="#adadad" /></Svg></button>
        <button type="button" aria-label="Duplicate"><Svg size={16}><path d="M7 2h14v12h-4V7H7z" fill="#bdbdbd" /><path d="M1 9h14v11H1z" fill="#9b9b9b" /></Svg></button>
      </div>
    </div>
    <div className="mt-2 flex pr-6 pl-[13px]"><Slider label="Animation position" value={0} max={10} ticks={11} /></div>
    <div className="mt-3.5 mb-3.5 flex gap-1 pl-[15px]">
      <button type="button" aria-label="Add Key Frame" className={`${frameButton} border-[#c5dafc] bg-[#c5dafc]`}><Plus size={16} /></button>
      <button type="button" aria-label="Remove" className={`${frameButton} border-transparent`}><Cross size={16} color="#a8a8a8" /></button>
      <button type="button" aria-label="Update" className={`${frameButton} border-transparent`}><Refresh a="#b5b5b5" b="#9b9b9b" size={18} /></button>
      <button type="button" aria-label="Remove all" className={`${frameButton} border-transparent`}>
        <Svg size={16}><path d="M5 1l10 20M17 1L5 21M13 3l7 5M19 1l-6 9M10 10l9 6M4 5l8 5M4 13l8-2" stroke="#a5a5a5" strokeWidth="3" /></Svg>
      </button>
      <button type="button" aria-label="Play animation" className={`${frameButton} border-transparent`}><Svg size={16}><path d="M5 1l12 10L5 21z" fill="#9b9b9b" /></Svg></button>
      <button type="button" aria-label="Stop" className={`${frameButton} border-transparent`}><Svg size={14}><path d="M1 1h20v20H1z" fill="#adadad" /></Svg></button>
      <button type="button" aria-label="Export" className={`${frameButton} border-[#cfe0fb] bg-[#e9f1fd]`}>
        <Svg size={19}><path d="M9 1l6 8h-4v7H7V9H3z" fill={ORANGE} /><path d="M1 18h16v3H1z" fill="#808080" /><path d="M17 8h5l-2.500 3z" fill="#555" /></Svg>
      </button>
    </div>
    <div role="tooltip" className="absolute top-[817px] left-[52px] rounded border border-[#e0e0e0] bg-[#f9f9f9] px-1.5 text-[18px] leading-[25px] whitespace-nowrap text-[#555] shadow">Add Key Frame</div>
  </div>
);

/* Red call-outs laid over the window */
const Callouts = () => (
  <>
    <svg viewBox="0 0 80 130" className="pointer-events-none absolute top-[138px] left-[326px] h-[130px] w-20" fill="#ee1c24">
      <path d="M10 117L59 26" stroke="#ee1c24" strokeWidth="7" strokeLinecap="round" />
      <path d="M71 6L47 25L59 25L68 35Z" />
    </svg>
    <span className="pointer-events-none absolute top-[256px] left-[350px] text-[28px] leading-10 text-[#ee1c24]">1</span>
    <svg viewBox="0 0 70 100" className="pointer-events-none absolute top-[994px] left-[1700px] h-[100px] w-[70px]" fill="#ee1c24">
      <path d="M62 8L18 78" stroke="#ee1c24" strokeWidth="7" strokeLinecap="round" />
      <path d="M5 95L10 65L18 77L30 78Z" />
    </svg>
    <span className="pointer-events-none absolute top-[938px] left-[1801px] text-[28px] leading-10 text-[#ee1c24]">3</span>
    <span className="pointer-events-none absolute right-4 bottom-1 font-['Noto_Sans_CJK_SC',sans-serif] text-xl leading-7 text-[#8e8e8e]/80">CSDN @天才小小傲</span>
  </>
);

export default function App() {
  return (
    <div className="relative h-screen overflow-hidden bg-[#f1f1f1] font-['Open_Sans','Noto_Sans_CJK_SC',sans-serif]">
      {/* the window hangs past both screen edges */}
      <div className="-mr-10 -ml-16 flex h-full flex-col">
        <TitleBar />
        <MenuBar />
        <MainToolbar />
        <TimeToolbar />
        <div className="flex min-h-0 flex-1 gap-2">
          <div className="flex w-[631px] shrink-0 flex-col">
            <DataTree />
            <DataEditors />
          </div>
          <Workspace />
          <WindowsDock />
        </div>
        <BottomDocks />
      </div>
      <AnimationDialog />
      <Callouts />
    </div>
  );
}
